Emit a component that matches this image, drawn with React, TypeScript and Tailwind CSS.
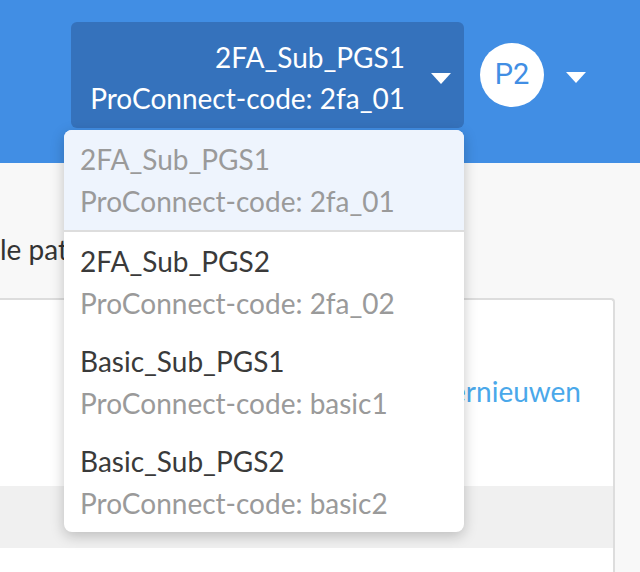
import React from "react";

const Caret = () => (
  <svg width="20" height="11" viewBox="0 0 20 11" className="block">
    <polygon points="0,0 20,0 10,11" fill="#ffffff" />
  </svg>
);

const items = [
  { name: "2FA_Sub_PGS1", code: "2fa_01", active: true },
  { name: "2FA_Sub_PGS2", code: "2fa_02" },
  { name: "Basic_Sub_PGS1", code: "basic1" },
  { name: "Basic_Sub_PGS2", code: "basic2" },
];

export default function App() {
  return (
    <div
      className="relative w-[640px] h-[572px] overflow-hidden bg-[#f8f8f8]"
      style={{ fontFamily: "Lato, 'Noto Sans', sans-serif" }}
    >
      {/* Header */}
      <div className="h-[163px] bg-[#418ee4] flex items-start pt-[22px] pl-[71px]">
        <div className="w-[393px] h-[106px] bg-[#3572bc] rounded-[6px] flex items-center">
          <div className="flex-1 text-right text-white text-[28px] leading-[41px] pt-[6px] pr-[26px]">
            <div>2FA_Sub_PGS1</div>
            <div>ProConnect-code: 2fa_01</div>
          </div>
          <div className="pr-[13px] pt-[6px]">
            <Caret />
          </div>
        </div>
        <div className="ml-[16px] mt-[21px] flex items-center">
          <div
            className="w-[64px] h-[64px] rounded-full bg-white flex items-center justify-center text-[#418ee4] text-[29px]"
            style={{ fontFamily: "Roboto, 'Noto Sans', sans-serif" }}
          >
            P2
          </div>
          <div className="ml-[22px] mt-[4px]">
            <Caret />
          </div>
        </div>
      </div>

      {/* Body */}
      <div className="h-[135px] pt-[65px]">
        <div className="w-[64px] overflow-hidden text-[28px] leading-[42px] text-[#333333] whitespace-nowrap">
          le patiënt
        </div>
      </div>
      <div className="ml-[-4px] w-[619px] bg-white border-t-2 border-r-2 border-[#dddddd] rounded-tr-[4px]">
        <div className="h-[186px] pt-[70px] pr-[32px] text-right text-[28px] leading-[42px] text-[#4aa8ea]">
          Vernieuwen
        </div>
        <div className="h-[62px] bg-[#f0f0f0]" />
        <div className="h-[40px] bg-white" />
      </div>

      {/* Dropdown menu */}
      <div className="absolute left-[64px] top-[130px] w-[400px] bg-white rounded-[8px] shadow-[0_4px_14px_rgba(0,0,0,0.22)] overflow-hidden">
        {items.map((it, i) => (
          <div
            key={i}
            className={
              it.active
                ? "h-[102px] bg-[#eef4fd] border-b-2 border-[#dddddd] px-[16px] pt-[8px]"
                : "h-[100px] px-[16px] pt-[8px]"
            }
          >
            <div
              className={
                it.active
                  ? "text-[28px] leading-[42px] text-[#9a9a9a]"
                  : "text-[28px] leading-[42px] text-[#3a3a3a]"
              }
            >
              {it.name}
            </div>
            <div className="text-[28px] leading-[42px] text-[#9a9a9a]">
              ProConnect-code: {it.code}
            </div>
          </div>
        ))}
      </div>
    </div>
  );
}
